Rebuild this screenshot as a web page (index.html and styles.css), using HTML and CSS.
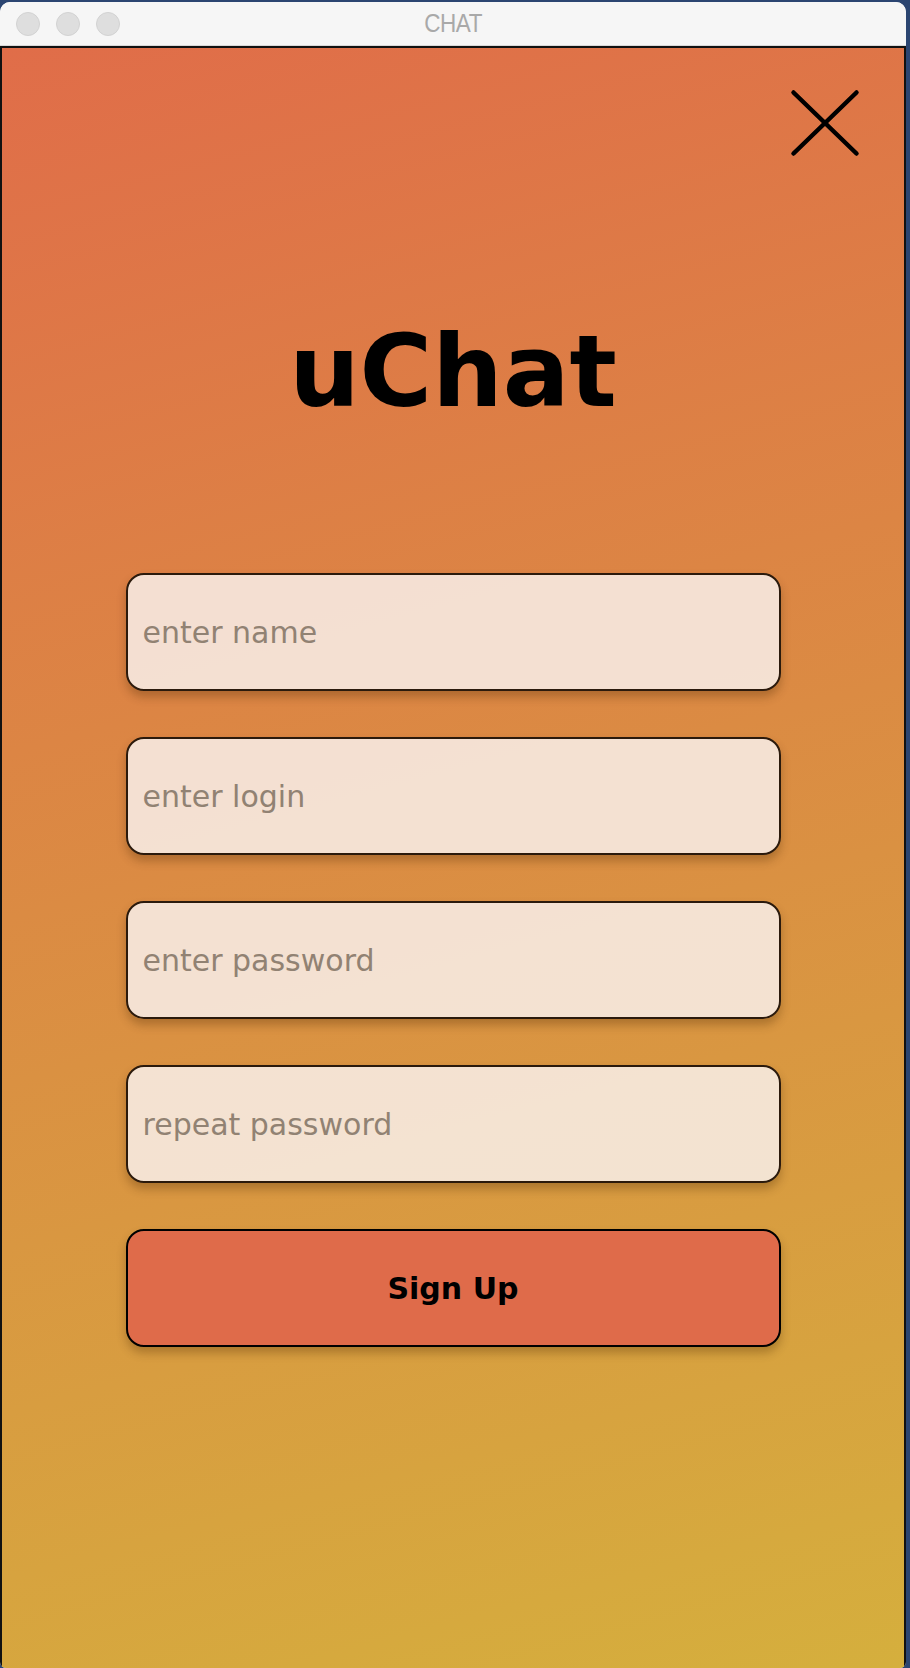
FILE: index.html
```html
<!DOCTYPE html>
<html lang="en">
<head>
<meta charset="utf-8">
<title>CHAT</title>
<link rel="stylesheet" href="styles.css">
</head>
<body>
<div class="window">
  <div class="titlebar">
    <div class="lights">
      <span class="light"></span>
      <span class="light"></span>
      <span class="light"></span>
    </div>
    <div class="wintitle">CHAT</div>
  </div>
  <div class="content">
    <div class="top-row">
      <svg class="close" width="70" height="68" viewBox="0 0 70 68" aria-label="close">
        <line x1="3.5" y1="3.5" x2="66.5" y2="64.5" stroke="#000" stroke-width="4.5" stroke-linecap="round"/>
        <line x1="66.5" y1="3.5" x2="3.5" y2="64.5" stroke="#000" stroke-width="4.5" stroke-linecap="round"/>
      </svg>
    </div>
    <h1 class="logo">uChat</h1>
    <form class="form">
      <input class="field" type="text" placeholder="enter name">
      <input class="field" type="text" placeholder="enter login">
      <input class="field" type="password" placeholder="enter password">
      <input class="field" type="password" placeholder="repeat password">
      <button class="submit" type="button">Sign Up</button>
    </form>
  </div>
</div>
</body>
</html>
```

FILE: styles.css
```css
html, body {
  margin: 0;
  padding: 0;
}
body {
  background: #2b4571;
  width: 910px;
  height: 1668px;
  overflow: hidden;
}
.window {
  margin-top: 2px;
  width: 906px;
  height: 1666px;
  border-radius: 10px 10px 6px 6px;
  overflow: hidden;
  display: flex;
  flex-direction: column;
  background: #f6f6f6;
}
.titlebar {
  position: relative;
  height: 43px;
  flex: none;
  background: #f6f6f6;
  border-bottom: 1px solid #d9d9d9;
  display: flex;
  align-items: center;
  justify-content: center;
}
.lights {
  position: absolute;
  left: 16px;
  top: 10px;
  display: flex;
  gap: 16px;
}
.light {
  width: 22px;
  height: 22px;
  border-radius: 50%;
  background: #dedede;
  border: 1px solid #d2d2d2;
}
.wintitle {
  font-family: "Liberation Sans", Arial, sans-serif;
  font-size: 25px;
  color: #a9a9a9;
  letter-spacing: -0.5px;
  transform: scaleX(0.9);
}
.content {
  flex: 1;
  border: 2px solid #111;
  border-bottom: none;
  background: linear-gradient(165deg, #e06d49 0%, #dc8544 38%, #d5af3d 100%);
  display: flex;
  flex-direction: column;
  align-items: center;
}
.top-row {
  align-self: stretch;
  display: flex;
  justify-content: flex-end;
  padding: 41px 44px 0 0;
}
.close {
  display: block;
}
.logo {
  margin: 165px 0 0 0;
  font-family: "DejaVu Sans", Verdana, sans-serif;
  font-weight: bold;
  font-size: 99px;
  line-height: 1;
  color: #000;
}
.form {
  margin-top: 152px;
  width: 655px;
  display: flex;
  flex-direction: column;
  gap: 46px;
}
.field, .submit {
  box-sizing: border-box;
  height: 118px;
  width: 100%;
  border-radius: 18px;
  font-family: "DejaVu Sans", Verdana, sans-serif;
  font-size: 30px;
  box-shadow: 0 6px 10px rgba(70, 35, 0, 0.3);
  margin: 0;
}
.field {
  border: 2px solid #2b1a0c;
  background: rgba(248, 240, 235, 0.85);
  padding: 0 15px;
  color: #333;
  outline: none;
}
.field::placeholder {
  color: #918273;
  opacity: 1;
}
.submit {
  border: 2px solid #000;
  background: #df6b4a;
  color: #000;
  font-weight: bold;
  font-size: 30px;
  cursor: pointer;
}
```
